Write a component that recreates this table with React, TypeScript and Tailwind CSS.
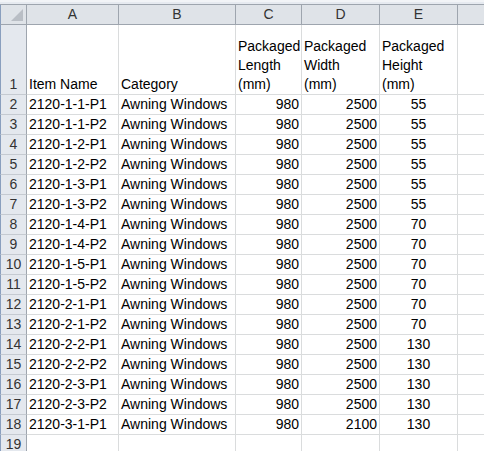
import React from "react"

const rows: [string, number, number, number][] = [
  ["2120-1-1-P1", 980, 2500, 55],
  ["2120-1-1-P2", 980, 2500, 55],
  ["2120-1-2-P1", 980, 2500, 55],
  ["2120-1-2-P2", 980, 2500, 55],
  ["2120-1-3-P1", 980, 2500, 55],
  ["2120-1-3-P2", 980, 2500, 55],
  ["2120-1-4-P1", 980, 2500, 70],
  ["2120-1-4-P2", 980, 2500, 70],
  ["2120-1-5-P1", 980, 2500, 70],
  ["2120-1-5-P2", 980, 2500, 70],
  ["2120-2-1-P1", 980, 2500, 70],
  ["2120-2-1-P2", 980, 2500, 70],
  ["2120-2-2-P1", 980, 2500, 130],
  ["2120-2-2-P2", 980, 2500, 130],
  ["2120-2-3-P1", 980, 2500, 130],
  ["2120-2-3-P2", 980, 2500, 130],
  ["2120-3-1-P1", 980, 2100, 130],
]

const cell = "shrink-0 border-r border-b border-[#dadcdd] px-[2px] leading-[19px]"
const rowHead =
  "shrink-0 w-[27px] border-l border-l-[#8a9fbe] border-r border-b border-r-[#9ea5ae] border-b-[#c5cad1] bg-[#e4e8ee] text-center text-[#333] leading-[19px]"
const colHead =
  "shrink-0 h-[20px] border-r border-b border-[#9ea5ae] bg-[#dfe3e8] text-center text-[#333] leading-[19px]"

function Header3({ a, b }: { a: string; b: string }) {
  return (
    <div className="flex flex-col">
      <span>Packaged</span>
      <span>{a}</span>
      <span>{b}</span>
    </div>
  )
}

export default function App() {
  return (
    <div
      className="w-[484px] h-[451px] overflow-hidden bg-white text-[14px] text-black"
      style={{ fontFamily: '"Liberation Sans", Arial, sans-serif' }}
    >
      <div className="h-[5px] border-t-2 border-t-[#f2f4f7] border-b border-b-[#9ea5ae] bg-[#e6eaf0]" />

      <div className="flex">
        <div className="shrink-0 w-[27px] h-[20px] border-l border-l-[#8a9fbe] border-r border-b border-[#9ea5ae] bg-[#dfe3e8] relative">
          <svg className="absolute right-[3px] bottom-[3px]" width="12" height="12" viewBox="0 0 12 12">
            <polygon points="12,0 12,12 0,12" fill="#b9bec5" />
          </svg>
        </div>
        <div className={`${colHead} w-[92px]`}>A</div>
        <div className={`${colHead} w-[117px]`}>B</div>
        <div className={`${colHead} w-[66px]`}>C</div>
        <div className={`${colHead} w-[78px]`}>D</div>
        <div className={`${colHead} w-[78px]`}>E</div>
        <div className={`${colHead} flex-1 border-r-0`} />
      </div>

      <div className="flex h-[70px]">
        <div className={`${rowHead} flex items-end justify-center`}>1</div>
        <div className={`${cell} w-[92px] flex items-end`}>Item Name</div>
        <div className={`${cell} w-[117px] flex items-end`}>Category</div>
        <div className={`${cell} w-[66px] flex items-end`}>
          <Header3 a="Length" b="(mm)" />
        </div>
        <div className={`${cell} w-[78px] flex items-end`}>
          <Header3 a="Width" b="(mm)" />
        </div>
        <div className={`${cell} w-[78px] flex items-end`}>
          <Header3 a="Height" b="(mm)" />
        </div>
        <div className={`${cell} flex-1 border-r-0`} />
      </div>

      {rows.map(([name, l, w, h], i) => (
        <div key={name} className="flex h-[20px]">
          <div className={rowHead}>{i + 2}</div>
          <div className={`${cell} w-[92px]`}>{name}</div>
          <div className={`${cell} w-[117px]`}>Awning Windows</div>
          <div className={`${cell} w-[66px] text-right`}>{l}</div>
          <div className={`${cell} w-[78px] text-right`}>{w}</div>
          <div className={`${cell} w-[78px] text-center`}>{h}</div>
          <div className={`${cell} flex-1 border-r-0`} />
        </div>
      ))}

      <div className="flex h-[20px]">
        <div className={rowHead}>19</div>
        <div className={`${cell} w-[92px]`} />
        <div className={`${cell} w-[117px]`} />
        <div className={`${cell} w-[66px]`} />
        <div className={`${cell} w-[78px]`} />
        <div className={`${cell} w-[78px]`} />
        <div className={`${cell} flex-1 border-r-0`} />
      </div>
    </div>
  )
}
